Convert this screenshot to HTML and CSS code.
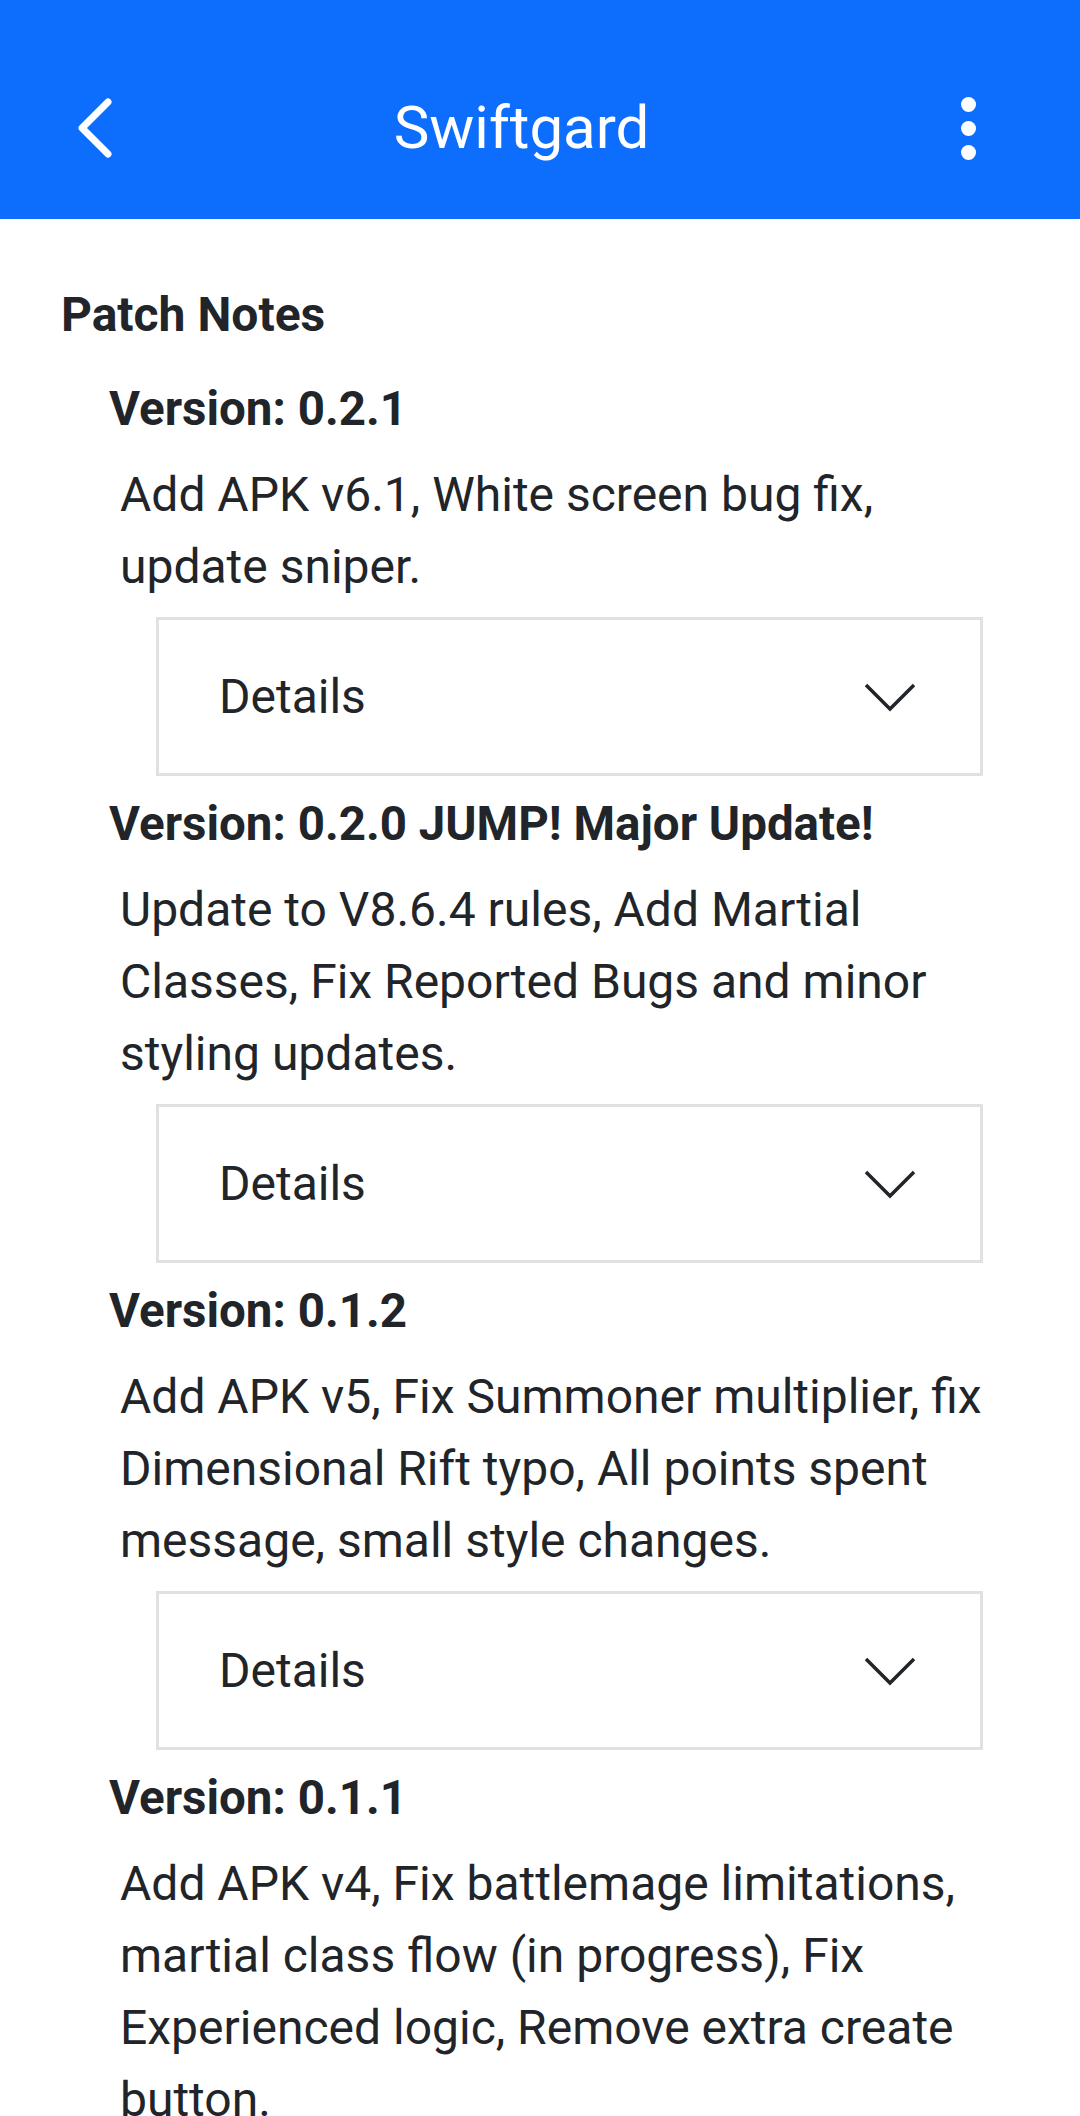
FILE: index.html
```html
<!DOCTYPE html>
<html>
<head>
<meta charset="utf-8">
<link rel="stylesheet" href="styles.css">
</head>
<body>
<header class="topbar">
  <div class="back">
    <svg width="40" height="64" viewBox="0 0 40 64"><polyline points="30,6 4,32 30,58" fill="none" stroke="#fff" stroke-width="7" stroke-linecap="round" stroke-linejoin="round"/></svg>
  </div>
  <div class="title">Swiftgard</div>
  <div class="menu">
    <span class="dot"></span><span class="dot"></span><span class="dot"></span>
  </div>
</header>
<main class="content">
  <h2 class="heading">Patch Notes</h2>
  <section class="entry">
    <h3 class="version">Version: 0.2.1</h3>
    <p class="notes">Add APK v6.1, White screen bug fix, update sniper.</p>
    <div class="details"><span>Details</span><svg class="chev" width="52" height="30" viewBox="0 0 52 30"><polyline points="2,3 26,27 50,3" fill="none" stroke="#212529" stroke-width="3.5"/></svg></div>
  </section>
  <section class="entry">
    <h3 class="version">Version: 0.2.0 JUMP! Major Update!</h3>
    <p class="notes">Update to V8.6.4 rules, Add Martial Classes, Fix Reported Bugs and minor styling updates.</p>
    <div class="details"><span>Details</span><svg class="chev" width="52" height="30" viewBox="0 0 52 30"><polyline points="2,3 26,27 50,3" fill="none" stroke="#212529" stroke-width="3.5"/></svg></div>
  </section>
  <section class="entry">
    <h3 class="version">Version: 0.1.2</h3>
    <p class="notes">Add APK v5, Fix Summoner multiplier, fix Dimensional Rift typo, All points spent message, small style changes.</p>
    <div class="details"><span>Details</span><svg class="chev" width="52" height="30" viewBox="0 0 52 30"><polyline points="2,3 26,27 50,3" fill="none" stroke="#212529" stroke-width="3.5"/></svg></div>
  </section>
  <section class="entry">
    <h3 class="version">Version: 0.1.1</h3>
    <p class="notes">Add APK v4, Fix battlemage limitations, martial class flow (in progress), Fix Experienced logic, Remove extra create button.</p>
  </section>
</main>
</body>
</html>
```

FILE: styles.css
```css
html, body {
  margin: 0;
  padding: 0;
  background: #fff;
  overflow: hidden;
}
body {
  font-family: Roboto, "Noto Sans", sans-serif;
  color: #212529;
  width: 1080px;
  height: 2116px;
}
.topbar {
  height: 219px;
  background: #0d6efd;
  display: flex;
  align-items: center;
  color: #fff;
  box-sizing: border-box;
  padding: 37px 0 0 78px;
}
.back {
  width: 40px;
  height: 64px;
  display: flex;
}
.title {
  flex: 1;
  text-align: center;
  font-size: 60px;
  line-height: 1;
  margin-left: -36px;
}
.menu {
  width: 119px;
  display: flex;
  flex-direction: column;
  align-items: flex-start;
  gap: 9px;
}
.dot {
  width: 15px;
  height: 15px;
  border-radius: 50%;
  background: #fff;
}
.content {
  padding: 0 78px 0 61px;
}
.heading {
  margin: 66px 0 34px;
  font-size: 48px;
  line-height: 60px;
  font-weight: 700;
}
.entry {
  padding-left: 48px;
}
.version {
  margin: 0 0 20px;
  font-size: 47.5px;
  line-height: 60px;
  font-weight: 700;
}
.notes {
  margin: 0 0 14px 11px;
  font-size: 48px;
  line-height: 72px;
  font-weight: 400;
}
.details {
  margin: 0 19px 18px 47px;
  height: 159px;
  box-sizing: border-box;
  border: 3px solid #e1e1e1;
  display: flex;
  align-items: center;
  justify-content: space-between;
  padding: 0 64px 0 60px;
  font-size: 48px;
}
.chev {
  display: block;
}
```
